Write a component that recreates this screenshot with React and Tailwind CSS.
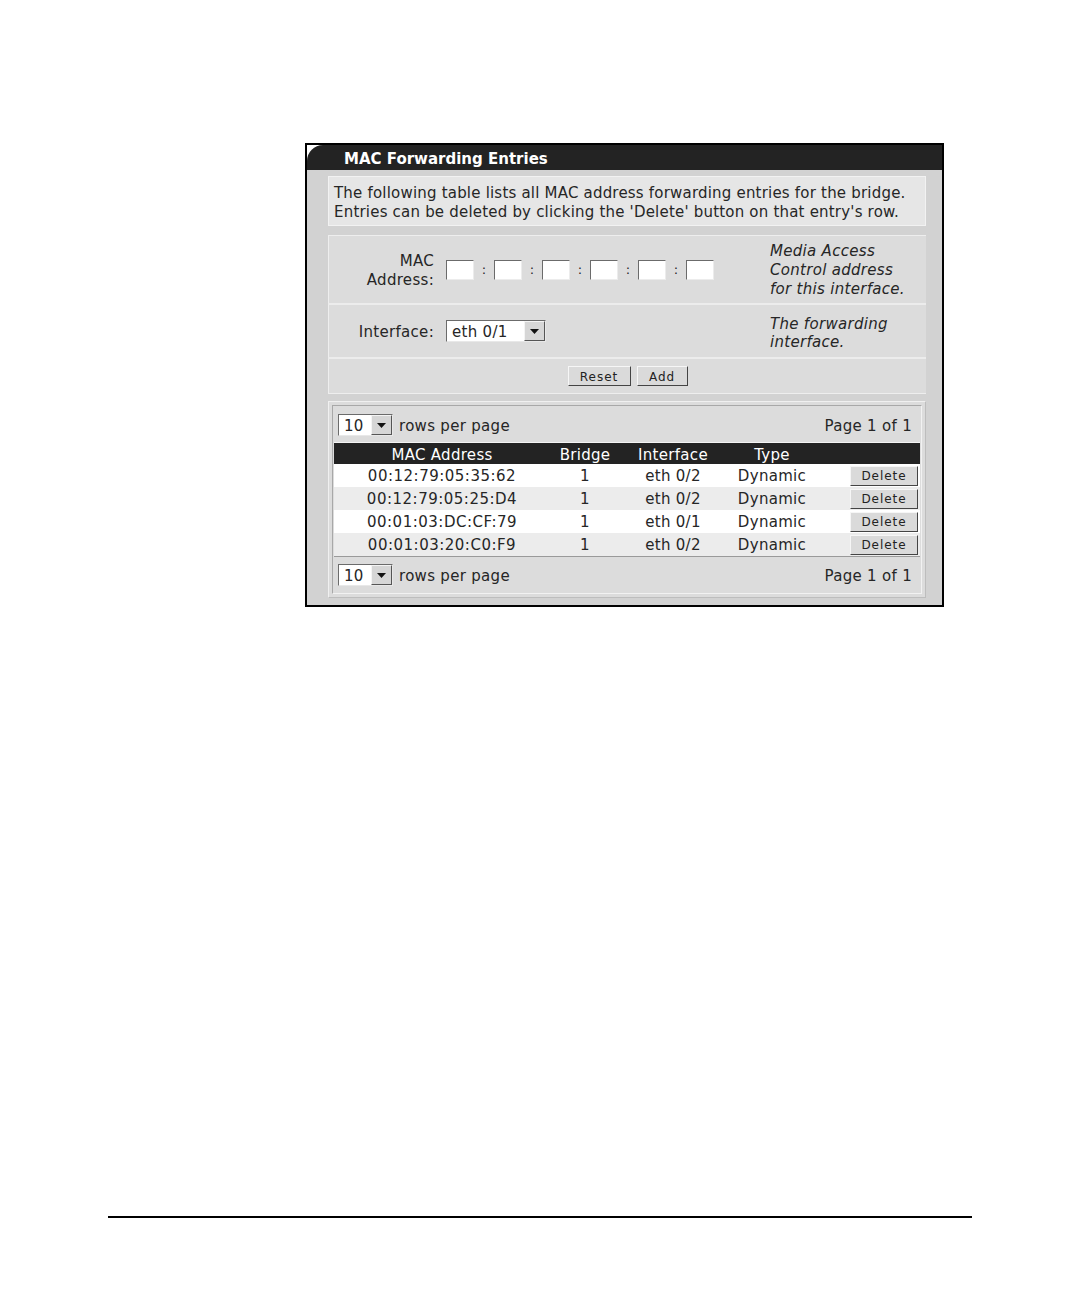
import React from 'react';

const entries = [
  { mac: '00:12:79:05:35:62', bridge: '1', iface: 'eth 0/2', type: 'Dynamic' },
  { mac: '00:12:79:05:25:D4', bridge: '1', iface: 'eth 0/2', type: 'Dynamic' },
  { mac: '00:01:03:DC:CF:79', bridge: '1', iface: 'eth 0/1', type: 'Dynamic' },
  { mac: '00:01:03:20:C0:F9', bridge: '1', iface: 'eth 0/2', type: 'Dynamic' },
];

const Arrow = () => (
  <svg width="9" height="5" viewBox="0 0 9 5">
    <polygon points="0,0 9,0 4.5,5" fill="#111" />
  </svg>
);

const DropBox = ({ value, width }) => (
  <div className={`flex h-[22px] border border-t-[#6b6b6b] border-l-[#6b6b6b] border-b-[#e8e8e8] border-r-[#e8e8e8] bg-white ${width}`}>
    <div className="flex-1 pl-[5px] pt-[2px] flex items-center text-[15px] leading-none">{value}</div>
    <div className="w-[21px] bg-[#d6d6d6] border border-t-[#f4f4f4] border-l-[#f4f4f4] border-b-[#555] border-r-[#555] flex items-center justify-center">
      <Arrow />
    </div>
  </div>
);

const SmallButton = ({ children, className }) => (
  <button
    type="button"
    className={`h-[20px] pt-[1px] bg-[#dadada] border border-t-[#f6f6f6] border-l-[#f6f6f6] border-b-[#444] border-r-[#444] text-[12px] tracking-[0.08em] text-[#222] leading-none ${className}`}
  >
    {children}
  </button>
);

const MacBox = () => (
  <div className="w-[28px] h-[20px] bg-white border border-t-[#6b6b6b] border-l-[#6b6b6b] border-b-[#ececec] border-r-[#ececec]" />
);

const App = () => {
  return (
    <div className="w-[1080px] h-[1296px] bg-white pt-[143px] font-['DejaVu_Sans',sans-serif] text-[#262626] tracking-[0.3px]">
      <div className="ml-[305px] w-[639px] h-[464px] border-2 border-black bg-white flex flex-col">
        {/* title bar */}
        <div className="h-[25px] bg-[#232323] rounded-tl-[16px] pl-[37px] pt-[3px] flex items-center text-white font-bold text-[15px] tracking-normal">
          MAC Forwarding Entries
        </div>

        <div className="flex-1 bg-[#d2d2d2] pl-[21px] pr-[16px] pt-[6px] flex flex-col">
          {/* intro */}
          <div className="h-[50px] bg-[#e6e6e6] border border-[#f2f2f2] pl-[5px] pt-[3px] flex flex-col justify-center text-[15px] leading-[19px] tracking-[0.2px]">
            <div>The following table lists all MAC address forwarding entries for the bridge.</div>
            <div>Entries can be deleted by clicking the 'Delete' button on that entry's row.</div>
          </div>

          {/* form */}
          <div className="mt-[9px] flex flex-col gap-[2px] bg-[#ececec] text-[15px]">
            <div className="h-[68px] bg-[#dcdcdc] border-l border-t border-[#eeeeee] flex items-center">
              <div className="w-[105px] pt-[2px] text-right leading-[19px]">
                <div>MAC</div>
                <div>Address:</div>
              </div>
              <div className="w-[336px] pl-[12px] flex items-center">
                {[0, 1, 2, 3, 4, 5].map((i) => (
                  <React.Fragment key={i}>
                    {i > 0 && <span className="w-[20px] text-center text-[13px]">:</span>}
                    <MacBox />
                  </React.Fragment>
                ))}
              </div>
              <div className="italic pt-[2px] leading-[19px]">
                <div>Media Access</div>
                <div>Control address</div>
                <div>for this interface.</div>
              </div>
            </div>

            <div className="h-[52px] bg-[#dcdcdc] border-l border-[#eeeeee] flex items-center">
              <div className="w-[105px] pt-[3px] text-right">Interface:</div>
              <div className="w-[336px] pl-[12px] flex items-center">
                <DropBox value="eth 0/1" width="w-[100px]" />
              </div>
              <div className="italic pt-[3px] leading-[18px]">
                <div>The forwarding</div>
                <div>interface.</div>
              </div>
            </div>

            <div className="h-[35px] bg-[#dcdcdc] border-l border-b border-[#eeeeee] flex items-center justify-center gap-[6px]">
              <SmallButton className="w-[63px]">Reset</SmallButton>
              <SmallButton className="w-[51px]">Add</SmallButton>
            </div>
          </div>

          {/* table */}
          <div className="mt-[7px] h-[197px] bg-[#dcdcdc] border border-t-[#f0f0f0] border-l-[#f0f0f0] border-b-[#bdbdbd] border-r-[#bdbdbd] p-[3px]">
            <div className="h-full border border-t-[#a8a8a8] border-l-[#a8a8a8] border-b-[#f2f2f2] border-r-[#f2f2f2] px-[1px] flex flex-col text-[15px]">
              <div className="h-[36px] pt-[2px] flex items-center justify-between pl-[4px] pr-[8px]">
                <div className="flex items-center gap-[6px]">
                  <DropBox value="10" width="w-[55px]" />
                  <span className="pt-[2px]">rows per page</span>
                </div>
                <span className="pt-[2px]">Page 1 of 1</span>
              </div>

              <div className="border-t border-[#f4f4f4]">
                <div className="h-[21px] pt-[1px] bg-[#232323] text-white grid grid-cols-[216px_70px_106px_92px_1fr] items-center text-center">
                  <span>MAC Address</span>
                  <span>Bridge</span>
                  <span>Interface</span>
                  <span>Type</span>
                  <span />
                </div>
                {entries.map((e, i) => (
                  <div
                    key={e.mac}
                    className={`h-[23px] grid grid-cols-[216px_70px_106px_92px_1fr] items-center text-center ${i % 2 === 0 ? 'bg-white' : 'bg-[#ececec]'}`}
                  >
                    <span className="pt-[1px] tracking-[0.5px]">{e.mac}</span>
                    <span className="pt-[1px]">{e.bridge}</span>
                    <span className="pt-[1px]">{e.iface}</span>
                    <span className="pt-[1px]">{e.type}</span>
                    <div className="flex justify-end pr-[2px]">
                      <SmallButton className="w-[68px]">Delete</SmallButton>
                    </div>
                  </div>
                ))}
              </div>

              <div className="flex-1 border-t border-[#9a9a9a] flex items-center justify-between pl-[4px] pr-[8px]">
                <div className="flex items-center gap-[6px]">
                  <DropBox value="10" width="w-[55px]" />
                  <span className="pt-[2px]">rows per page</span>
                </div>
                <span className="pt-[2px]">Page 1 of 1</span>
              </div>
            </div>
          </div>
        </div>
      </div>

      <div className="mt-[609px] ml-[108px] w-[864px] h-[2px] bg-black" />
    </div>
  );
};

export default App;
